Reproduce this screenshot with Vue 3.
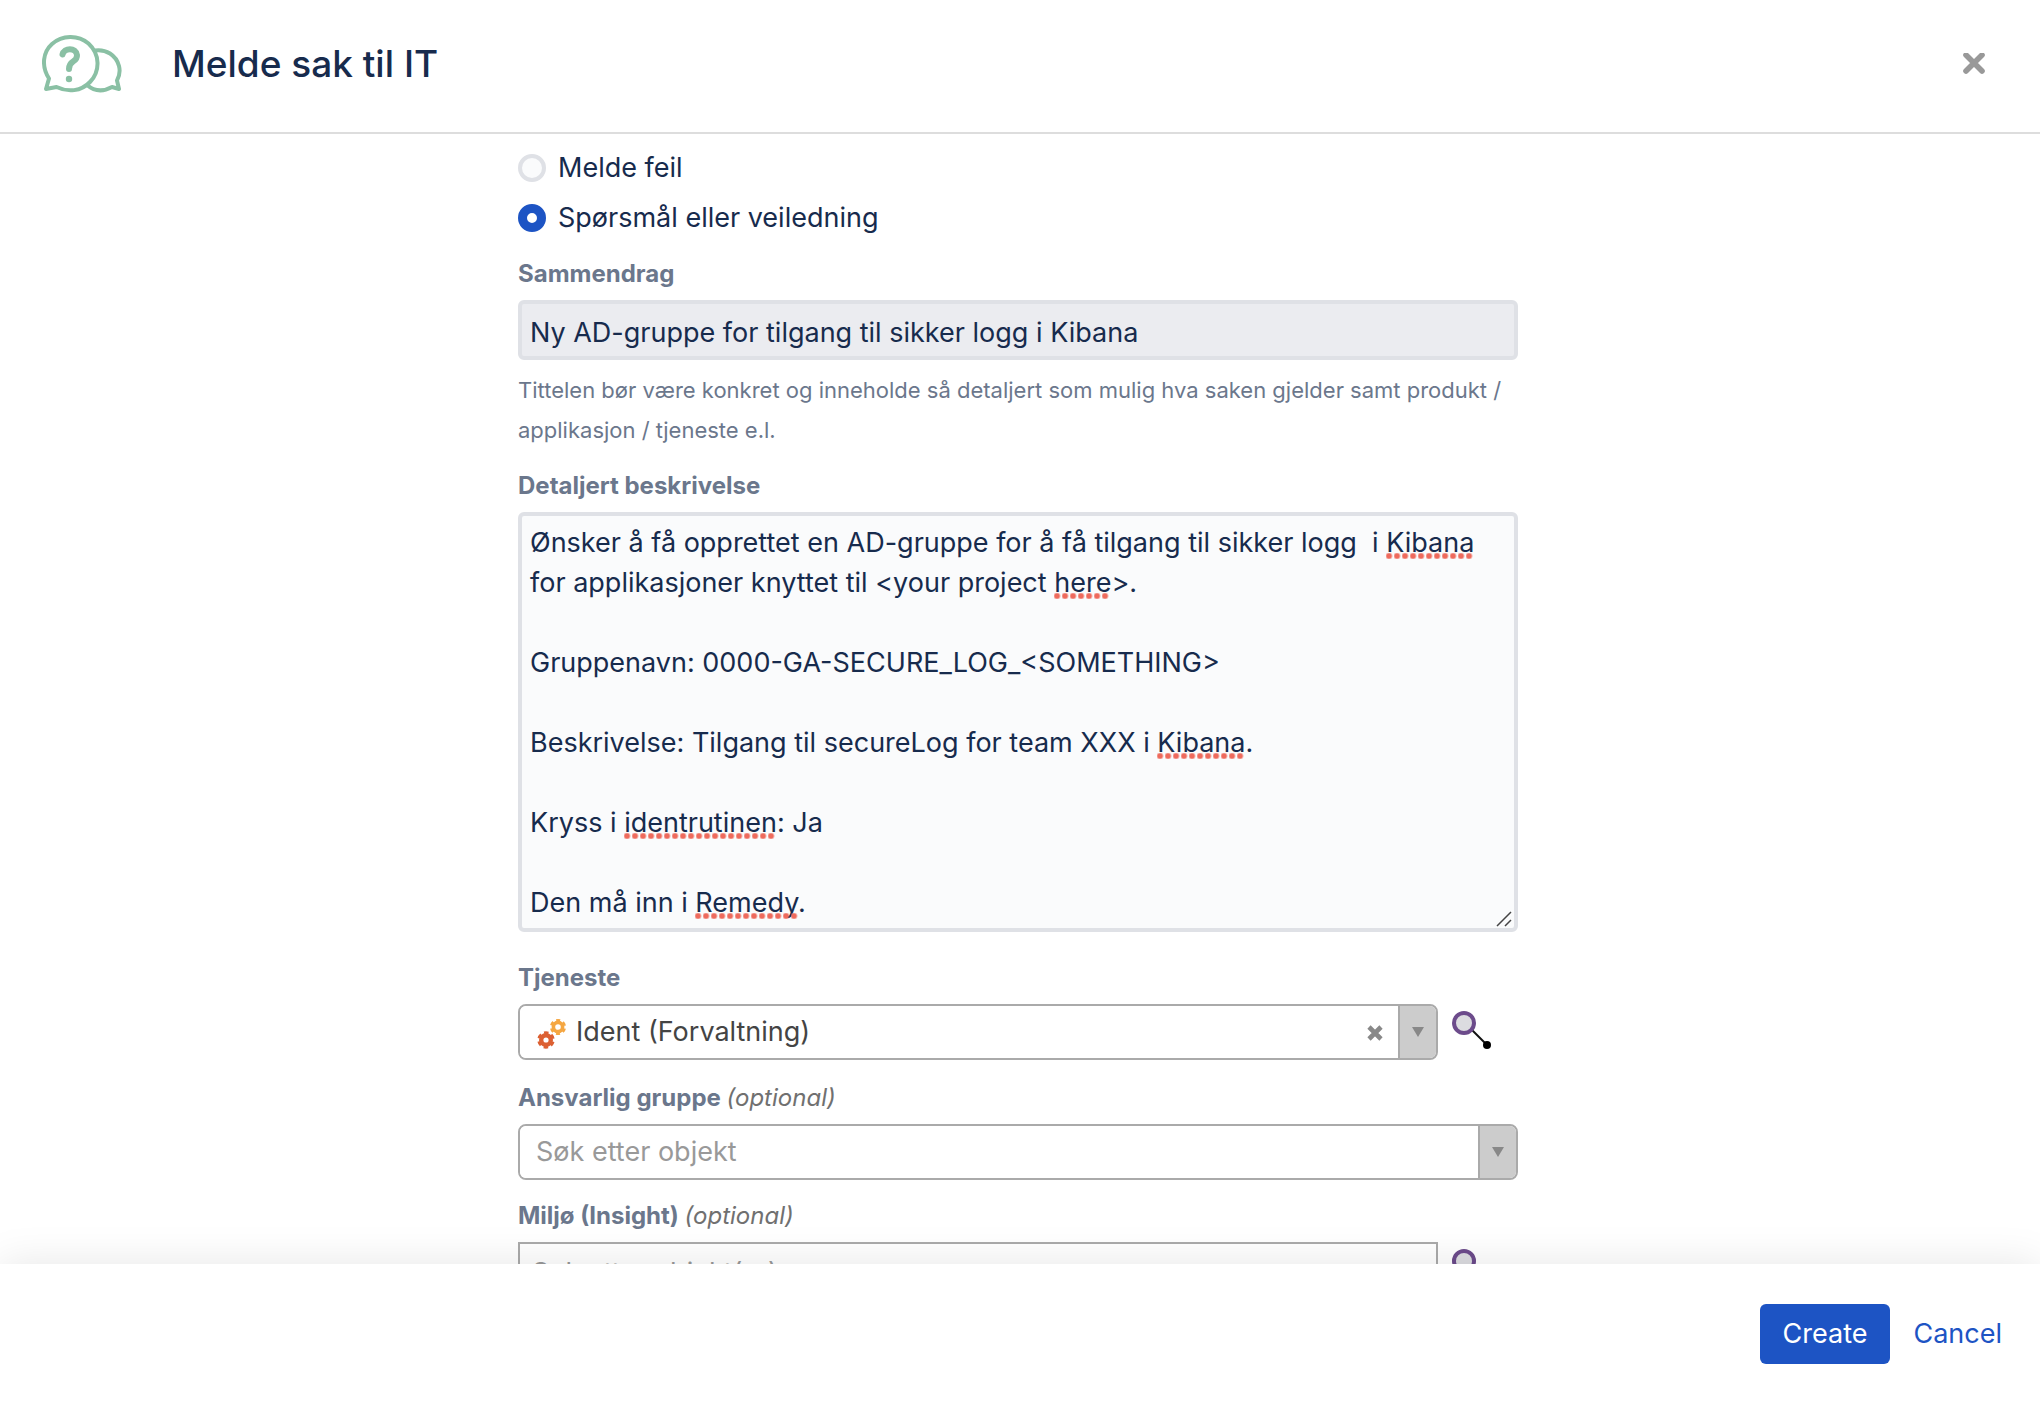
<script setup>
import { nextTick, onBeforeUnmount, onMounted, ref, watch } from 'vue'

const requestType = ref('question')
const summary = ref('Ny AD-gruppe for tilgang til sikker logg i Kibana')
const description = ref(
  [
    'Ønsker å få opprettet en AD-gruppe for å få tilgang til sikker logg  i Kibana for applikasjoner knyttet til <your project here>.',
    'Gruppenavn: 0000-GA-SECURE_LOG_<SOMETHING>',
    'Beskrivelse: Tilgang til secureLog for team XXX i Kibana.',
    'Kryss i identrutinen: Ja',
    'Den må inn i Remedy.',
  ].join('\n\n'),
)
const service = ref('ident')
const group = ref('')
const environment = ref('')

// Spell-check marks: find where the flagged words land inside the textarea.
const flagged = /(Kibana|here|identrutinen|Remedy)/
const area = ref(null)
const marks = ref([])

function measureMarks() {
  const el = area.value
  if (!el) return
  const style = getComputedStyle(el)
  const probe = document.createElement('div')
  for (const key of ['font', 'padding', 'border', 'boxSizing', 'width']) {
    probe.style[key] = style[key]
  }
  probe.style.position = 'absolute'
  probe.style.visibility = 'hidden'
  probe.style.top = '0'
  probe.style.whiteSpace = 'pre-wrap'
  description.value.split(flagged).forEach((text, i) => {
    const span = document.createElement('span')
    if (i % 2) span.dataset.flagged = '1'
    span.textContent = text
    probe.append(span)
  })
  document.body.append(probe)
  const origin = probe.getBoundingClientRect()
  marks.value = [...probe.querySelectorAll('[data-flagged]')].map((span) => {
    const r = span.getBoundingClientRect()
    return {
      left: `${Math.round(r.left - origin.left)}px`,
      top: `${Math.round((r.top + r.bottom) / 2 - origin.top)}px`,
      width: `${Math.round(r.width / 8) * 8}px`,
    }
  })
  probe.remove()
}

onMounted(() => {
  measureMarks()
  window.addEventListener('resize', measureMarks)
})
onBeforeUnmount(() => window.removeEventListener('resize', measureMarks))
watch(description, () => nextTick(measureMarks))
</script>

<template>
  <div class="dialog">
    <header class="head">
      <svg class="logo" width="84" height="60" viewBox="0 0 84 60" fill="none" stroke="#8ac0a4" stroke-width="4" stroke-linejoin="round" aria-hidden="true">
        <path d="M4 55 L7 44.500 C-1 32 1 18 10 10 C20 1 36 0.500 46.500 9.500 C58 20 58.500 37 48 48 C39 57.500 26 58.500 14.500 53 Z" />
        <path d="M53 16.500 C64 15 74 21 77 32 C78.500 38 77.500 42 75 46.500 L77 55 L70 53 C61 58 52 57 45 51" />
        <path d="M20.500 20.500 C22 13.500 34 13 35 21 C35.500 29 27 25.500 27 35" stroke-width="6" stroke-linecap="round" />
        <circle cx="27" cy="45" r="3.200" fill="#8ac0a4" stroke="none" />
      </svg>
      <h1>Melde sak til IT</h1>
      <button class="close" type="button" aria-label="Lukk">
        <svg width="22" height="22" viewBox="0 1 22 22" stroke="#999" stroke-width="5.600" stroke-linecap="round"><path d="M3 3 19 19M19 3 3 19" /></svg>
      </button>
    </header>

    <main class="body">
      <form id="request" class="form" @submit.prevent>
        <div class="radios" role="radiogroup">
          <label class="radio"><input v-model="requestType" type="radio" name="type" value="bug" /> <span>Melde feil</span></label>
          <label class="radio"><input v-model="requestType" type="radio" name="type" value="question" /> <span>Spørsmål eller veiledning</span></label>
        </div>

        <div class="field">
          <label for="summary">Sammendrag</label>
          <input id="summary" v-model="summary" class="box summary" type="text" />
          <p class="help">Tittelen bør være konkret og inneholde så detaljert som mulig hva saken gjelder samt produkt / applikasjon / tjeneste e.l.</p>
        </div>

        <div class="field">
          <label for="description">Detaljert beskrivelse</label>
          <div class="editor">
            <textarea id="description" ref="area" v-model="description" class="box area" rows="10" spellcheck="false"></textarea>
            <span v-for="(mark, i) in marks" :key="i" class="mark" :style="mark"></span>
            <svg class="grip" width="16" height="16" viewBox="0 0 16 16" stroke="#444" stroke-width="1.500" aria-hidden="true"><path d="M1 15 15 1M9 15 15 9" /></svg>
          </div>
        </div>

        <div class="field service">
          <label for="service">Tjeneste</label>
          <div class="row">
            <div class="picker">
              <svg class="gears" width="30" height="32" viewBox="-15 -16 30 32" fill="none" aria-hidden="true">
                <g stroke="#f5a742">
                  <circle cx="6" cy="-7" r="4.600" stroke-width="3.600" />
                  <circle cx="6" cy="-7" r="6.600" stroke-width="3" stroke-dasharray="3.800 3.112" stroke-dashoffset="-1.500" />
                </g>
                <g stroke="#dc6032">
                  <circle cx="-6" cy="6" r="4.800" stroke-width="4.400" />
                  <circle cx="-6" cy="6" r="7" stroke-width="3.400" stroke-dasharray="4.200 3.130" stroke-dashoffset="-1.600" />
                </g>
              </svg>
              <select id="service" v-model="service" class="with-icon">
                <option value="ident">Ident (Forvaltning)</option>
              </select>
              <button class="clear" type="button" aria-label="Fjern valg">
                <svg width="16" height="16" viewBox="0 0 16 16" stroke="#888" stroke-width="4.600"><path d="M2 2 14 14M14 2 2 14" /></svg>
              </button>
              <span class="arrow"><svg width="12" height="10" viewBox="0 0 12 10" fill="#888"><path d="M0 0H12L6 10Z" /></svg></span>
            </div>
            <button class="lookup" type="button" aria-label="Søk">
              <svg width="40" height="40" viewBox="0 0 40 40"><path d="M20 20 35 35" stroke="#111" stroke-width="2" /><circle cx="35" cy="35" r="4" /><circle cx="12" cy="13" r="10" fill="#dcdce0" stroke="#6c4b8b" stroke-width="4" /></svg>
            </button>
          </div>
        </div>

        <div class="field group">
          <label for="group">Ansvarlig gruppe <em>(optional)</em></label>
          <div class="picker">
            <select id="group" v-model="group" class="empty">
              <option value="">Søk etter objekt</option>
            </select>
            <span class="arrow"><svg width="12" height="10" viewBox="0 0 12 10" fill="#888"><path d="M0 0H12L6 10Z" /></svg></span>
          </div>
        </div>

        <div class="field">
          <label for="environment">Miljø (Insight) <em>(optional)</em></label>
          <div class="row">
            <input id="environment" v-model="environment" class="multi" type="text" placeholder="Søk etter objekt(er)" />
            <button class="lookup" type="button" aria-label="Søk">
              <svg width="40" height="40" viewBox="0 0 40 40"><path d="M20 20 35 35" stroke="#111" stroke-width="2" /><circle cx="35" cy="35" r="4" /><circle cx="12" cy="13" r="10" fill="#dcdce0" stroke="#6c4b8b" stroke-width="4" /></svg>
            </button>
          </div>
        </div>
      </form>
    </main>

    <footer class="foot">
      <button class="create" type="submit" form="request">Create</button>
      <button class="cancel" type="button">Cancel</button>
    </footer>
  </div>
</template>

<style>
body {
  background: #fff;
}
</style>

<style scoped>
.dialog {
  display: flex;
  flex-direction: column;
  height: 100vh;
  overflow: hidden;
  font: 27px/40px Inter, "Liberation Sans", sans-serif;
  color: #172b4d;
}
.dialog * {
  box-sizing: border-box;
}
input,
select,
textarea,
button {
  margin: 0;
  font: inherit;
  color: inherit;
}
button {
  padding: 0;
  border: 0;
  background: none;
  cursor: pointer;
}
svg {
  display: block;
}
.head {
  display: flex;
  flex: none;
  align-items: center;
  height: 134px;
  padding: 0 55px 4px 42px;
  border-bottom: 2px solid #ddd;
}
.logo {
  margin-right: 46px;
}
h1 {
  flex: 1;
  margin: 0;
  font-size: 37px;
  line-height: 48px;
  font-weight: 500;
}
.body {
  flex: 1;
  min-height: 0;
  overflow: hidden;
  padding: 14px 4px 0 0;
}
.form {
  width: 100%;
  max-width: 1000px;
  margin: 0 auto;
}
.radios {
  display: flex;
  flex-direction: column;
  gap: 10px;
}
.radio {
  display: flex;
  align-items: center;
  gap: 12px;
}
.radio input {
  appearance: none;
  width: 28px;
  height: 28px;
  border: 4px solid #dfe1e6;
  border-radius: 50%;
  background: #fafbfc;
}
.radio input:checked {
  border: 9px solid #1d54c4;
  background: #fff;
}
.field {
  margin-top: 20px;
}
.field > label {
  display: block;
  margin-bottom: 10px;
  font-size: 24px;
  line-height: 32px;
  font-weight: 700;
  color: #6b778c;
}
.field em {
  font-weight: 400;
  color: #707070;
}
.box {
  display: block;
  width: 100%;
  border: 4px solid #dfe1e6;
  border-radius: 6px;
  background: #fafbfc;
}
.summary {
  height: 60px;
  padding: 4px 8px 0;
  background: #ebecf0;
}
.help {
  margin: 10px 0 0;
  font-size: 22px;
  color: #6b778c;
}
.editor {
  position: relative;
}
.area {
  height: 420px;
  padding: 7px 8px 5px;
  resize: none;
  overflow: hidden;
}
.mark {
  position: absolute;
  height: 6px;
  margin-top: 10px;
  background: radial-gradient(circle at 3px 3px, #ee6a5c 2px, #ee6a5c00 4px) 0 0 / 8px 6px repeat-x;
  pointer-events: none;
}
.grip {
  position: absolute;
  right: 6px;
  bottom: 5px;
}
.service {
  margin-top: 30px;
}
.group {
  margin-top: 22px;
}
.row {
  display: flex;
  align-items: flex-start;
  gap: 14px;
}
.picker {
  position: relative;
  display: flex;
  flex: 1;
  height: 56px;
  border: 2px solid #aaa;
  border-radius: 8px;
  overflow: hidden;
}
select {
  flex: 1;
  appearance: none;
  padding: 0 16px;
  border: 0;
  background: #fff;
  color: #444;
}
.with-icon {
  padding-left: 56px;
}
.empty {
  color: #999;
}
.gears {
  position: absolute;
  left: 17px;
  top: 12px;
  pointer-events: none;
}
.clear {
  position: absolute;
  right: 53px;
  top: 19px;
}
.arrow {
  display: flex;
  align-items: center;
  justify-content: center;
  width: 38px;
  border-left: 2px solid #aaa;
  background: #ccc;
}
.lookup {
  flex: none;
  width: 66px;
  padding-top: 6px;
}
.multi {
  flex: 1;
  height: 60px;
  padding: 0 12px;
  border: 2px solid #aaa;
  background: #fff;
}
.multi::placeholder {
  color: #999;
}
.foot {
  position: relative;
  display: flex;
  flex: none;
  align-items: flex-start;
  justify-content: flex-end;
  height: 138px;
  padding: 40px 38px 0;
  background: #fff;
  box-shadow: 0 0 40px #0000001a;
}
.create,
.cancel {
  height: 60px;
  padding: 0 23px;
  border-radius: 6px;
  color: #1d54c4;
}
.create {
  background: #1d54c4;
  color: #fff;
}
.cancel {
  padding-right: 0;
}
</style>
